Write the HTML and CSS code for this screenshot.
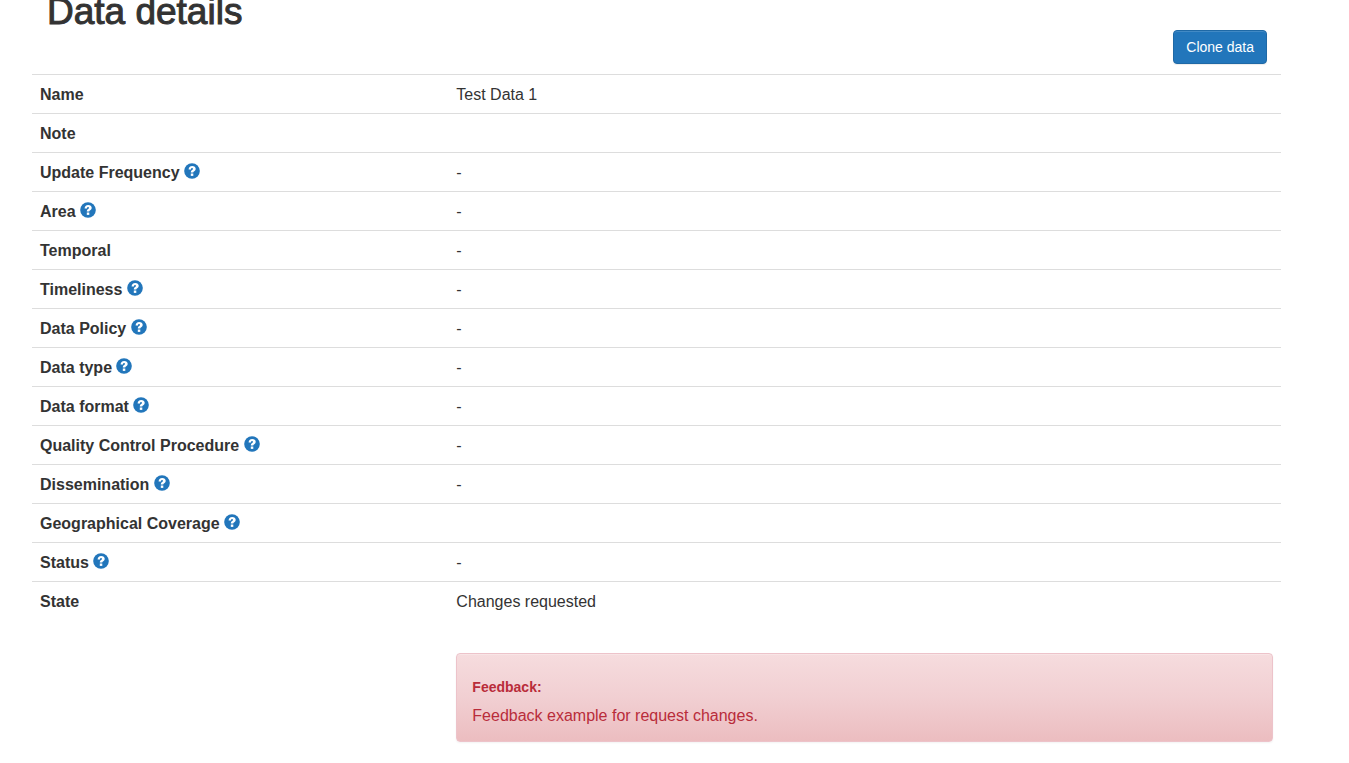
FILE: index.html
```html
<!DOCTYPE html>
<html lang="en">
<head>
<meta charset="utf-8">
<title>Data details</title>
<link rel="stylesheet" href="styles.css">
</head>
<body>
<svg class="sprite" aria-hidden="true">
  <symbol id="help" viewBox="0 0 16 16">
    <circle cx="8" cy="8" r="7.8" fill="#2276bb"/>
    <path d="M4.600 6.500C4.700 4.200 6 2.900 8.200 2.900c2.100 0 3.500 1.100 3.500 2.900 0 1.200-.6 1.900-1.400 2.400-.8.500-1 .8-1 1.400H6.800c0-1.400.4-1.900 1.300-2.600.6-.4.900-.7.900-1.100 0-.5-.4-.9-.9-.9-.7 0-1.100.5-1.100 1.500z" fill="#fff"/>
    <path d="M6.800 10.500h2.500v2.400H6.800z" fill="#fff"/>
  </symbol>
</svg>
<main class="page">
  <header class="page-header">
    <h1 class="title">Data details</h1>
    <button class="btn" type="button">Clone data</button>
  </header>
  <table class="details">
    <tbody>
      <tr><th scope="row">Name</th><td>Test Data 1</td></tr>
      <tr><th scope="row">Note</th><td></td></tr>
      <tr><th scope="row">Update Frequency <svg class="help"><use href="#help"/></svg></th><td>-</td></tr>
      <tr><th scope="row">Area <svg class="help"><use href="#help"/></svg></th><td>-</td></tr>
      <tr><th scope="row">Temporal</th><td>-</td></tr>
      <tr><th scope="row">Timeliness <svg class="help"><use href="#help"/></svg></th><td>-</td></tr>
      <tr><th scope="row">Data Policy <svg class="help"><use href="#help"/></svg></th><td>-</td></tr>
      <tr><th scope="row">Data type <svg class="help"><use href="#help"/></svg></th><td>-</td></tr>
      <tr><th scope="row">Data format <svg class="help"><use href="#help"/></svg></th><td>-</td></tr>
      <tr><th scope="row">Quality Control Procedure <svg class="help"><use href="#help"/></svg></th><td>-</td></tr>
      <tr><th scope="row">Dissemination <svg class="help"><use href="#help"/></svg></th><td>-</td></tr>
      <tr><th scope="row">Geographical Coverage <svg class="help"><use href="#help"/></svg></th><td></td></tr>
      <tr><th scope="row">Status <svg class="help"><use href="#help"/></svg></th><td>-</td></tr>
      <tr>
        <th scope="row">State</th>
        <td>Changes requested
          <div class="alert">
            <h2 class="alert-title">Feedback:</h2>
            <p class="alert-text">Feedback example for request changes.</p>
          </div>
        </td>
      </tr>
    </tbody>
  </table>
</main>
</body>
</html>
```

FILE: styles.css
```css
* { box-sizing: border-box; }

body {
  margin: 0;
  background: #fff;
  color: #333;
  font: 16px/22px "Liberation Sans", Arial, sans-serif;
}

.sprite { display: none; }

.page { padding: 0 68px 0 32px; }

.page-header {
  display: flex;
  justify-content: space-between;
  align-items: flex-end;
  padding: 0 14px 10px 15px;
}

.title {
  margin: -8px 0 32px;
  font-size: 37px;
  font-weight: 400;
  line-height: 40px;
  -webkit-text-stroke: 1px #333;
}

.btn {
  height: 34px;
  padding: 0 12px;
  border: 1px solid #1f69a6;
  border-radius: 4px;
  background: #2276bb;
  box-shadow: inset 0 1px 0 rgba(255, 255, 255, .15), 0 1px 1px rgba(0, 0, 0, .075);
  color: #fff;
  font: 14px/20px "Liberation Sans", Arial, sans-serif;
}

.details {
  width: 100%;
  border-collapse: separate;
  border-spacing: 0;
  table-layout: fixed;
}

.details th,
.details td {
  height: 39px;
  padding: 9px 8px 7px;
  border-top: 1px solid #ddd;
  text-align: left;
  vertical-align: top;
}

.details th { width: 33.333%; }

.help {
  width: 16px;
  height: 16px;
  vertical-align: -1px;
}

.alert {
  margin-top: 40px;
  padding: 15px;
  border: 1px solid #edc3ca;
  border-radius: 4px;
  background: linear-gradient(#f6dcde, #f1cfd2 50%, #ecbdc0);
  box-shadow: inset 0 1px 0 rgba(255, 255, 255, .25), 0 1px 2px rgba(0, 0, 0, .05);
  color: #b92c3a;
}

.alert-title {
  margin: 10px 0;
  font-size: 14px;
  font-weight: 700;
  line-height: 16px;
}

.alert-text {
  margin: 0;
  line-height: 21px;
}
```
